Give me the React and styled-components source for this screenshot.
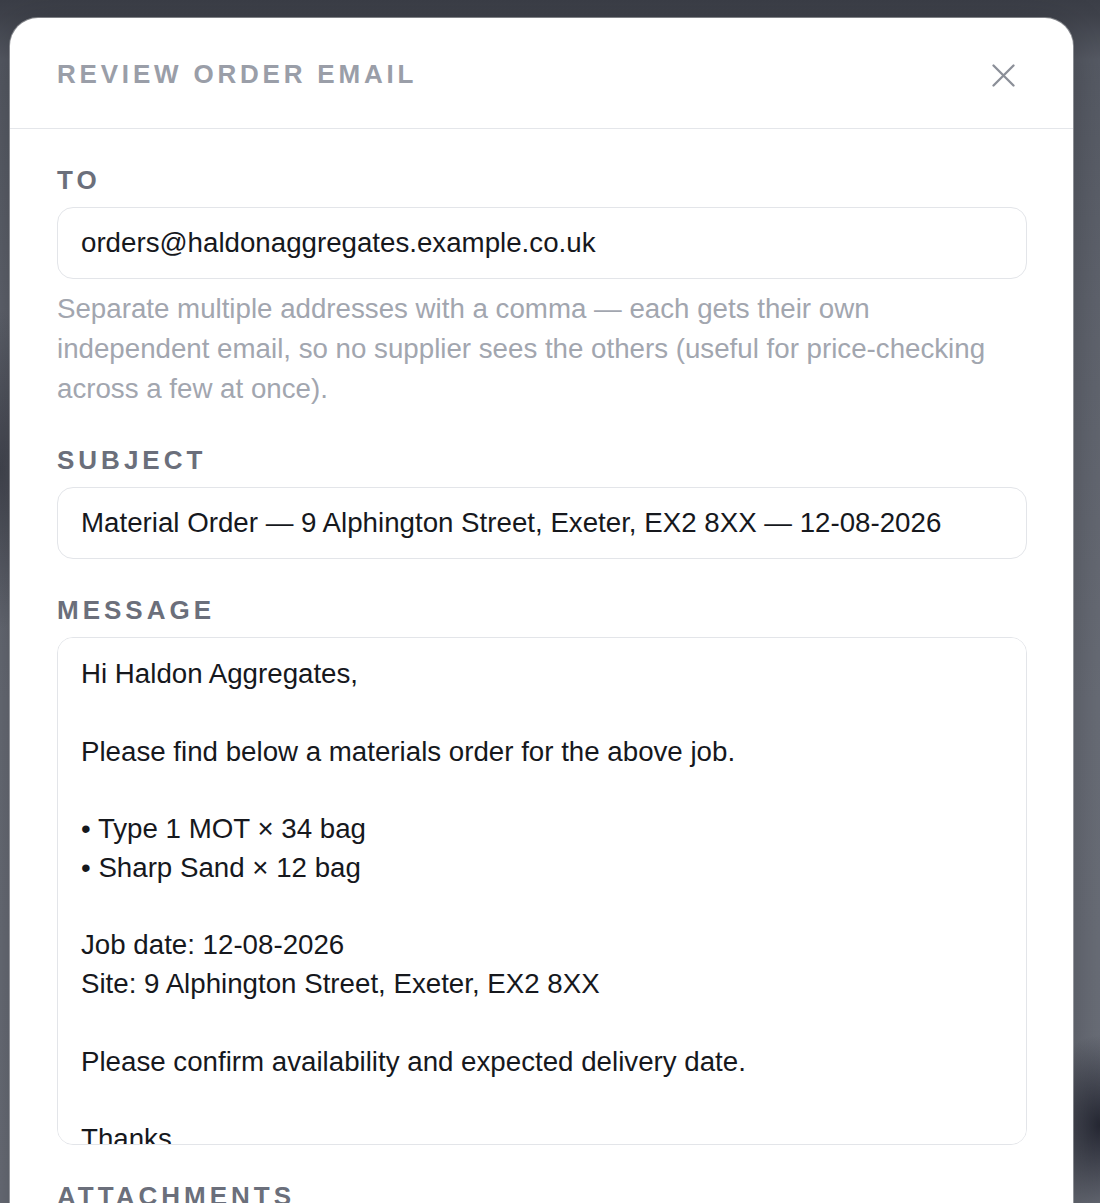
import React from "react";
import styled, { createGlobalStyle } from "styled-components";

const Global = createGlobalStyle`
  html, body {
    margin: 0;
    padding: 0;
    height: 100%;
    overflow: hidden;
  }
  body {
    font-family: "Liberation Sans", Arial, Helvetica, sans-serif;
    -webkit-font-smoothing: antialiased;
  }
  #root { height: 100%; }
`;

const Backdrop = styled.div`
  height: 100vh;
  overflow: hidden;
  box-sizing: border-box;
  padding: 18px 27px 0 10px;
  background:
    radial-gradient(ellipse 60px 90px at 1100px 1125px, rgba(30, 32, 44, 0.9), rgba(30, 32, 44, 0) 100%),
    radial-gradient(ellipse 40px 160px at 0px 470px, rgba(40, 42, 52, 0.55), rgba(40, 42, 52, 0) 100%),
    linear-gradient(180deg, #3b3e47 0px, #3f424b 16px, #565a64 60px, #5f636d 300px, #686c76 700px, #6a6e78 100%);
`;

const Modal = styled.div`
  background: #fff;
  border-radius: 28px 28px 0 0;
  min-height: 1300px;
  box-shadow: 0 0 0 1px rgba(255, 255, 255, 0.35), 0 10px 40px rgba(0, 0, 0, 0.25);
  display: flex;
  flex-direction: column;
`;

const Header = styled.header`
  height: 111px;
  box-sizing: border-box;
  border-bottom: 1.5px solid #e4e6ea;
  display: flex;
  align-items: center;
  justify-content: space-between;
  padding: 0 25px 0 47px;
`;

const Title = styled.h2`
  margin: 0;
  font-size: 26px;
  font-weight: 700;
  letter-spacing: 3.8px;
  color: #9a9ea8;
  line-height: 32px;
  padding-top: 2px;
`;

const CloseButton = styled.button`
  width: 44px;
  height: 44px;
  border: none;
  background: none;
  padding: 0;
  display: flex;
  align-items: center;
  justify-content: center;
  cursor: pointer;
  margin-right: 23px;
  margin-top: 4px;
`;

const Body = styled.div`
  padding: 35px 46px 0 47px;
  display: flex;
  flex-direction: column;
  gap: 35px;
`;

const Field = styled.div`
  display: flex;
  flex-direction: column;
`;

const Label = styled.label`
  font-size: 26px;
  font-weight: 700;
  letter-spacing: 4px;
  color: #6b6f7b;
  line-height: 32px;
  margin-bottom: 11px;
`;

const Input = styled.input`
  box-sizing: border-box;
  width: 100%;
  height: 72px;
  border: 1.5px solid #e3e5e9;
  border-radius: 16px;
  padding: 0 23px;
  font-family: "Liberation Sans", Arial, Helvetica, sans-serif;
  font-size: 27.7px;
  color: #16181d;
  background: #fff;
  outline: none;
`;

const Hint = styled.p`
  margin: 10px 0 0;
  font-size: 27.7px;
  line-height: 40px;
  color: #a2a6af;
`;

const TextArea = styled.textarea`
  box-sizing: border-box;
  width: 100%;
  height: 508px;
  border: 1.5px solid #e3e5e9;
  border-radius: 16px;
  padding: 17px 23px;
  font-family: "Liberation Sans", Arial, Helvetica, sans-serif;
  font-size: 27.7px;
  line-height: 38.75px;
  color: #16181d;
  background: #fff;
  resize: none;
  outline: none;
  scrollbar-width: none;
  &::-webkit-scrollbar { display: none; }
`;

const message = `Hi Haldon Aggregates,

Please find below a materials order for the above job.

• Type 1 MOT × 34 bag
• Sharp Sand × 12 bag

Job date: 12-08-2026
Site: 9 Alphington Street, Exeter, EX2 8XX

Please confirm availability and expected delivery date.

Thanks`;

export default function App() {
  return (
    <>
      <Global />
      <Backdrop>
        <Modal role="dialog" aria-label="Review order email">
          <Header>
            <Title>REVIEW ORDER EMAIL</Title>
            <CloseButton aria-label="Close">
              <svg width="23" height="23" viewBox="0 0 23 23" fill="none">
                <path d="M1.5 1.5 L21.5 21.5 M21.5 1.5 L1.5 21.5" stroke="#8b8f98" strokeWidth="2.3" strokeLinecap="round" />
              </svg>
            </CloseButton>
          </Header>
          <Body>
            <Field>
              <Label>TO</Label>
              <Input defaultValue="orders@haldonaggregates.example.co.uk" />
              <Hint>
                Separate multiple addresses with a comma — each gets their own independent email, so no supplier sees the others (useful for price-checking across a few at once).
              </Hint>
            </Field>
            <Field>
              <Label>SUBJECT</Label>
              <Input defaultValue="Material Order — 9 Alphington Street, Exeter, EX2 8XX — 12-08-2026" />
            </Field>
            <Field>
              <Label>MESSAGE</Label>
              <TextArea defaultValue={message} />
            </Field>
            <Field>
              <Label>ATTACHMENTS</Label>
            </Field>
          </Body>
        </Modal>
      </Backdrop>
    </>
  );
}
